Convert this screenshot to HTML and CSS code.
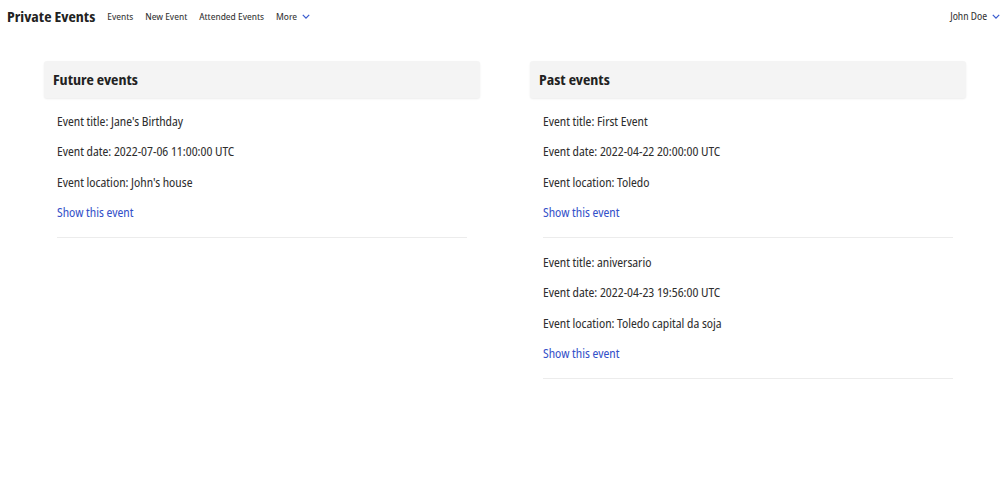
FILE: index.html
```html
<!DOCTYPE html>
<html>
<head>
<meta charset="utf-8">
<link rel="stylesheet" href="styles.css">
</head>
<body>
<nav class="navbar">
  <div class="nav-left">
    <a class="brand" href="#">Private Events</a>
    <a class="nav-link" href="#">Events</a>
    <a class="nav-link" href="#">New Event</a>
    <a class="nav-link" href="#">Attended Events</a>
    <a class="nav-link dropdown" href="#">More <svg class="chev" viewBox="0 0 10 6" width="8" height="5"><path d="M1 1l4 4 4-4" fill="none" stroke="#3a5ccf" stroke-width="1.6"/></svg></a>
  </div>
  <div class="nav-right">
    <a class="nav-link dropdown" href="#">John Doe <svg class="chev" viewBox="0 0 10 6" width="8" height="5"><path d="M1 1l4 4 4-4" fill="none" stroke="#3a5ccf" stroke-width="1.6"/></svg></a>
  </div>
</nav>
<main class="columns">
  <section class="column">
    <h2 class="card-header">Future events</h2>
    <div class="event">
      <p>Event title: Jane's Birthday</p>
      <p>Event date: 2022-07-06 11:00:00 UTC</p>
      <p>Event location: John's house</p>
      <p><a class="link" href="#">Show this event</a></p>
    </div>
  </section>
  <section class="column">
    <h2 class="card-header">Past events</h2>
    <div class="event">
      <p>Event title: First Event</p>
      <p>Event date: 2022-04-22 20:00:00 UTC</p>
      <p>Event location: Toledo</p>
      <p><a class="link" href="#">Show this event</a></p>
    </div>
    <div class="event">
      <p>Event title: aniversario</p>
      <p>Event date: 2022-04-23 19:56:00 UTC</p>
      <p>Event location: Toledo capital da soja</p>
      <p><a class="link" href="#">Show this event</a></p>
    </div>
  </section>
</main>
</body>
</html>
```
FILE: styles.css
```css
* { box-sizing: border-box; }
body {
  margin: 0;
  font-family: "Noto Sans Display", "Roboto Condensed", sans-serif;
  font-stretch: condensed;
  color: #2e2e2e;
  background: #fff;
}
a { text-decoration: none; }
.navbar {
  height: 32px;
  display: flex;
  align-items: center;
  justify-content: space-between;
  padding: 0 8px 0 7px;
}
.nav-left, .nav-right {
  display: flex;
  align-items: center;
}
.brand {
  font-size: 14px;
  font-weight: bold;
  color: #222;
  margin-right: 12px;
}
.nav-link {
  font-size: 9.8px;
  color: #333;
  margin-right: 12px;
  display: flex;
  align-items: center;
}
.nav-right .nav-link { margin-right: 0; font-size: 10px; }
.chev { margin-left: 5px; }
.columns {
  display: grid;
  grid-template-columns: 436px 436px;
  column-gap: 50px;
  padding: 29px 0 0 44px;
}
.card-header {
  margin: 0;
  height: 37px;
  display: flex;
  align-items: center;
  padding: 0 9px;
  background: #f4f4f4;
  border-radius: 3px;
  box-shadow: 0 1px 2px rgba(0,0,0,0.08);
  font-size: 14px;
  font-weight: bold;
  color: #222;
}
.event {
  margin: 0 13px;
  padding: 15.5px 0 15px;
  border-bottom: 1px solid #ececec;
  font-size: 12px;
}
.event:first-of-type { padding-top: 14.5px; }
.event p {
  margin: 0 0 12.5px;
  line-height: 18px;
}
.event p:last-child { margin-bottom: 0; }
.link { color: #3451c9; }
```
